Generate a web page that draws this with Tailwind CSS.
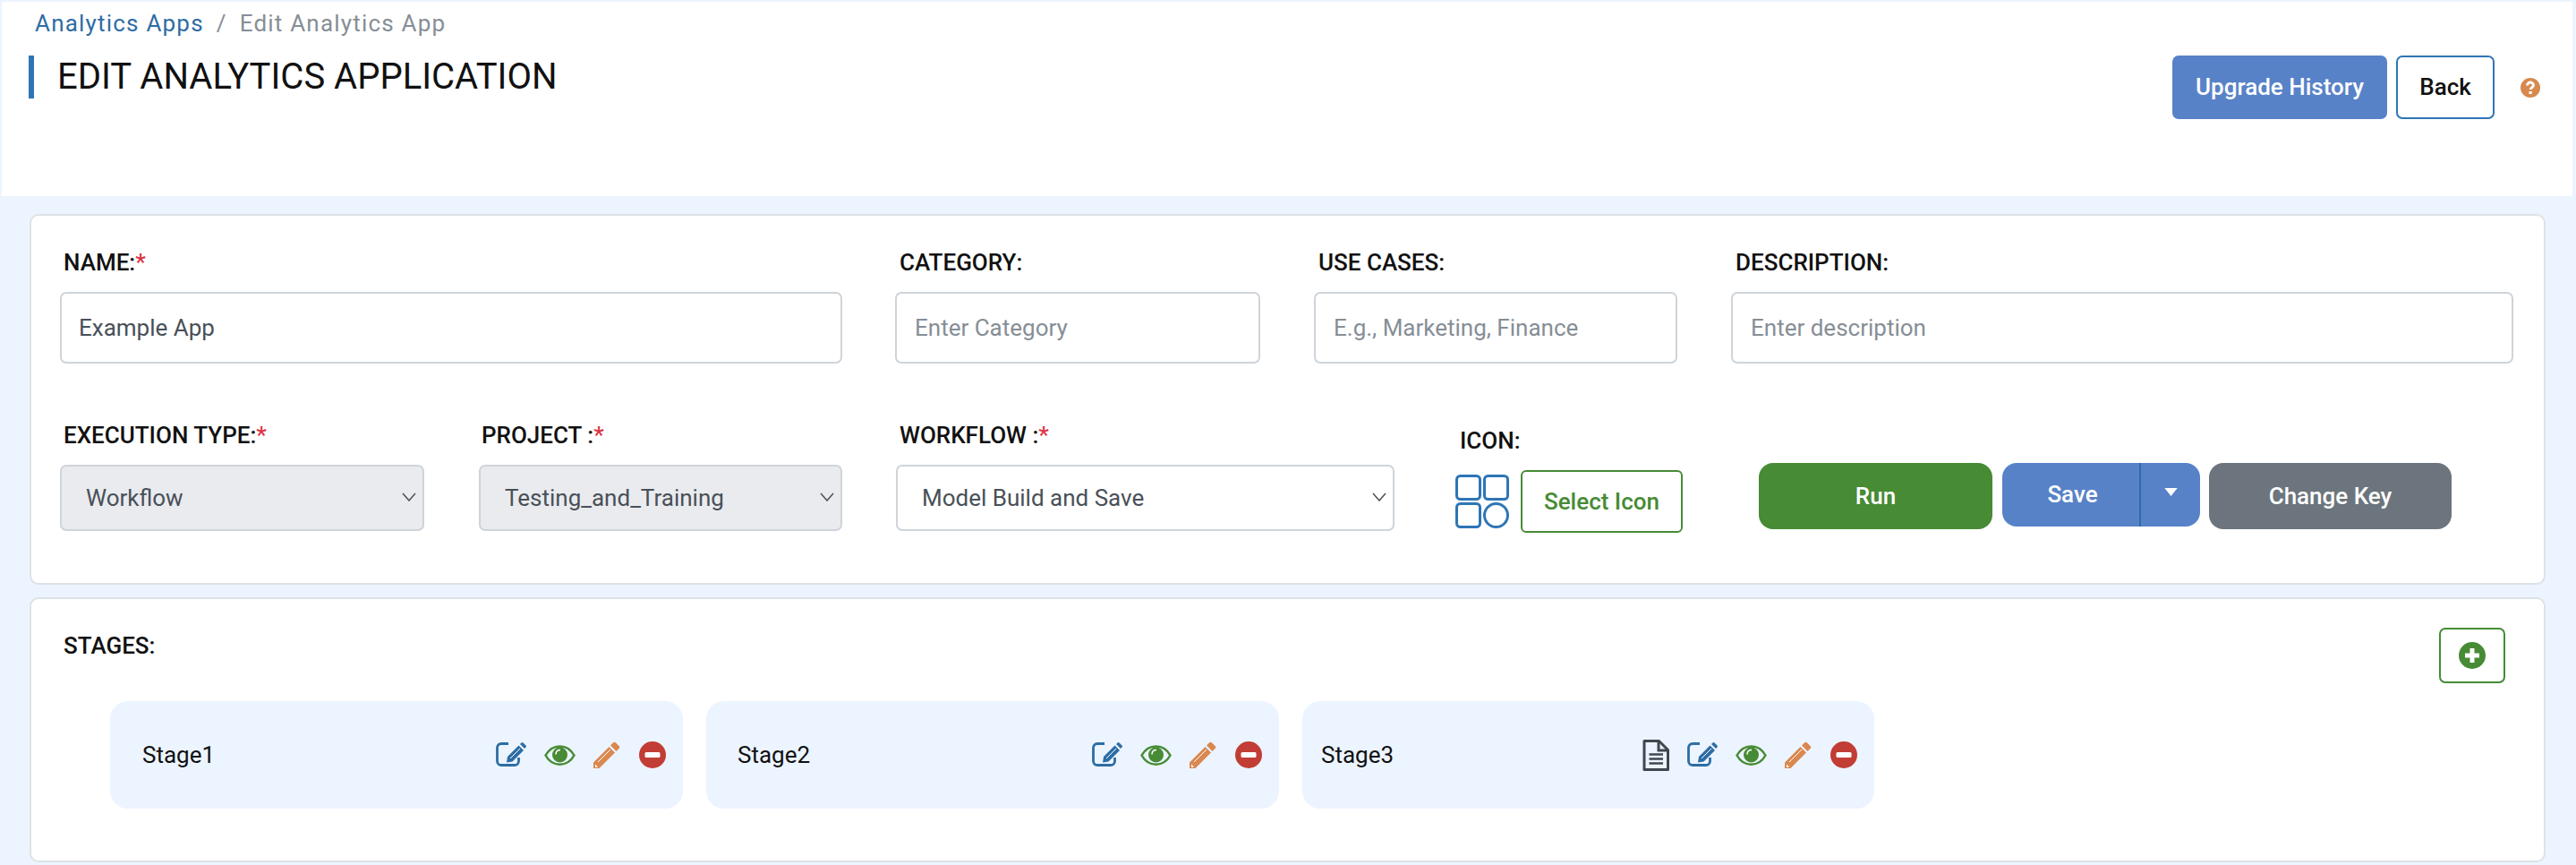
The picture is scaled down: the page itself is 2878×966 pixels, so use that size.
<!DOCTYPE html>
<html lang="en">
<head>
  <meta charset="UTF-8" />
  <title>Edit Analytics App</title>
  <script src="https://cdn.jsdelivr.net/npm/@tailwindcss/browser@4"></script>
</head>
<body class="bg-[#ecf4ff] font-['Roboto',sans-serif] text-[#111] text-[26px] h-[966px] overflow-hidden">

  <!-- shared icons -->
  <svg class="hidden">
    <symbol id="i-edit" viewBox="0 0 35 28">
      <path d="M14 1.500H6a4.500 4.500 0 0 0-4.500 4.500V21a4.500 4.500 0 0 0 4.500 4.500h15a4.500 4.500 0 0 0 4.500-4.500v-4" fill="none" stroke="#2e6da4" stroke-width="2.800"/>
      <path d="M12 22.500l1-6.500L25.500 3.500l5.500 5.500L18.500 21.500z" fill="#2e6da4"/>
      <path d="M27 2l1.500-1.500a1.500 1.500 0 0 1 2 0l3 3a1.500 1.500 0 0 1 0 2L32 7z" fill="#2e6da4"/>
      <path d="M16 18L27 7" stroke="#fff" stroke-width="1"/>
    </symbol>
    <symbol id="i-eye" viewBox="0 0 35 23">
      <path d="M1.500 11.500C9-2 26-2 33.500 11.500 26 25 9 25 1.500 11.500z" fill="none" stroke="#478b35" stroke-width="2.500"/>
      <circle cx="17.500" cy="11" r="8.500" fill="#478b35"/>
      <path d="M13 10.500c0-3 2-5 5-5" fill="none" stroke="#fff" stroke-width="1.500"/>
    </symbol>
    <symbol id="i-pencil" viewBox="0 0 30 30">
      <path d="M0 23.500L17.500 6l6.500 6.500L6.500 30H0z" fill="#d98850"/>
      <path d="M19 4.500l3-3a2 2 0 0 1 3 0l3.500 3.500a2 2 0 0 1 0 3l-3 3z" fill="#d98850"/>
      <path d="M5 23L19 9" stroke="#fff" stroke-width="1"/>
      <path d="M2 25.500l3 3-3 .5z" fill="#fff"/>
    </symbol>
    <symbol id="i-minus" viewBox="0 0 30 30">
      <circle cx="15" cy="15" r="15" fill="#c23d35"/>
      <rect x="6.500" y="12" width="17" height="6" rx="1.500" fill="#fff"/>
    </symbol>
    <symbol id="i-doc" viewBox="0 0 30 35">
      <path d="M2 1.500H18.500L28.500 11.500V33.500H2z" fill="none" stroke="#3f474f" stroke-width="3" stroke-linejoin="round"/>
      <path d="M18 2v10h10" fill="none" stroke="#3f474f" stroke-width="3"/>
      <path d="M7.500 16.500H23M7.500 21.500H23M7.500 26.500H23" stroke="#3f474f" stroke-width="2.500"/>
    </symbol>
  </svg>

  <!-- page header -->
  <header class="mx-[2px] mt-[2px] w-[2872px] h-[217px] bg-white flex justify-between items-start">
    <div>
      <nav class="pl-[37px] h-[26px] mt-[11px] flex items-center text-[26px] leading-[26px] tracking-[1.2px]">
        <a class="text-[#2e6da4]">Analytics Apps</a>
        <span class="text-[#868e96] mx-[14px]">/</span>
        <span class="text-[#868e96]">Edit Analytics App</span>
      </nav>
      <h1 class="ml-[30px] mt-[23px] h-[48px] border-l-[6px] border-[#2e75b6] pl-[26px] text-[40px] leading-[48px] font-normal text-[#111]">EDIT ANALYTICS APPLICATION</h1>
    </div>
    <div class="flex items-center mt-[60px] pr-[36px]">
      <button class="w-[240px] h-[71px] bg-[#5882c8] text-white font-medium rounded-[7px]">Upgrade History</button>
      <button class="ml-[10px] w-[110px] h-[71px] bg-white border-2 border-[#2e75b6] font-medium rounded-[7px]">Back</button>
      <svg class="ml-[29px]" width="22" height="22" viewBox="0 0 22 22">
        <circle cx="11" cy="11" r="11" fill="#d68a50"/>
        <path d="M7.500 8.500c0-2 1.500-3.500 3.500-3.500s3.500 1.400 3.500 3.200c0 2.300-3.300 2.500-3.300 4.800" fill="none" stroke="#fff" stroke-width="2.800"/>
        <rect x="9.500" y="15" width="3.200" height="3" fill="#fff"/>
      </svg>
    </div>
  </header>

  <main class="mt-[20px] ml-[33px] w-[2811px]">

    <!-- form card -->
    <section class="h-[414px] bg-white border-2 border-[#dee2e6] rounded-[10px] pl-[32px] pt-[36px]">
      <div class="flex">
        <div class="w-[874px]">
          <label class="block pl-[4px] h-[32px] leading-[32px] font-medium">NAME:<span class="text-[#dc3545]">*</span></label>
          <input class="mt-[17px] w-full h-[80px] border-2 border-[#ced4da] rounded-[7px] pl-[19px] pr-[20px] text-[26px] text-[#495057]" value="Example App" />
        </div>
        <div class="ml-[59px] w-[408px]">
          <label class="block pl-[5px] h-[32px] leading-[32px] font-medium">CATEGORY:</label>
          <input class="mt-[17px] w-full h-[80px] border-2 border-[#ced4da] rounded-[7px] px-[20px] text-[26px] placeholder:text-[#868e96]" placeholder="Enter Category" />
        </div>
        <div class="ml-[60px] w-[406px]">
          <label class="block pl-[5px] h-[32px] leading-[32px] font-medium">USE CASES:</label>
          <input class="mt-[17px] w-full h-[80px] border-2 border-[#ced4da] rounded-[7px] px-[20px] text-[26px] placeholder:text-[#868e96]" placeholder="E.g., Marketing, Finance" />
        </div>
        <div class="ml-[60px] w-[874px]">
          <label class="block pl-[5px] h-[32px] leading-[32px] font-medium">DESCRIPTION:</label>
          <input class="mt-[17px] w-full h-[80px] border-2 border-[#ced4da] rounded-[7px] px-[20px] text-[26px] placeholder:text-[#868e96]" placeholder="Enter description" />
        </div>
      </div>

      <div class="flex mt-[64px]">
        <div class="w-[407px]">
          <label class="block pl-[4px] h-[32px] leading-[32px] font-medium">EXECUTION TYPE:<span class="text-[#dc3545]">*</span></label>
          <div class="relative mt-[17px]">
            <select disabled class="appearance-none w-full h-[74px] bg-[#e9ebef] border-2 border-[#ced4da] rounded-[7px] pl-[27px] text-[26px] text-[#495057] opacity-100"><option>Workflow</option></select>
            <svg class="absolute right-[9px] top-[31px]" width="16" height="10" viewBox="0 0 16 10"><path d="M1 1l7 8 7-8" fill="none" stroke="#495057" stroke-width="1.500"/></svg>
          </div>
        </div>
        <div class="ml-[61px] w-[406px]">
          <label class="block pl-[3px] h-[32px] leading-[32px] font-medium">PROJECT :<span class="text-[#dc3545]">*</span></label>
          <div class="relative mt-[17px]">
            <select disabled class="appearance-none w-full h-[74px] bg-[#e9ebef] border-2 border-[#ced4da] rounded-[7px] pl-[27px] text-[26px] text-[#495057] opacity-100"><option>Testing_and_Training</option></select>
            <svg class="absolute right-[9px] top-[31px]" width="16" height="10" viewBox="0 0 16 10"><path d="M1 1l7 8 7-8" fill="none" stroke="#495057" stroke-width="1.500"/></svg>
          </div>
        </div>
        <div class="ml-[60px] w-[557px]">
          <label class="block pl-[4px] h-[32px] leading-[32px] font-medium">WORKFLOW :<span class="text-[#dc3545]">*</span></label>
          <div class="relative mt-[17px]">
            <select class="appearance-none w-full h-[74px] bg-white border-2 border-[#ced4da] rounded-[7px] pl-[27px] text-[26px] text-[#495057]"><option>Model Build and Save</option></select>
            <svg class="absolute right-[9px] top-[31px]" width="16" height="10" viewBox="0 0 16 10"><path d="M1 1l7 8 7-8" fill="none" stroke="#495057" stroke-width="1.500"/></svg>
          </div>
        </div>
        <div class="ml-[68px] w-[254px]">
          <label class="block pl-[5px] mt-[6px] h-[32px] leading-[32px] font-medium">ICON:</label>
          <div class="flex items-center mt-[17px]">
            <svg width="60" height="60" viewBox="0 0 60 60" fill="none" stroke="#2e75b6" stroke-width="3">
              <rect x="1.500" y="1.500" width="26" height="26" rx="4"/>
              <rect x="32.500" y="1.500" width="26" height="26" rx="4"/>
              <rect x="1.500" y="32.500" width="26" height="26" rx="4"/>
              <circle cx="45.500" cy="45.500" r="13"/>
            </svg>
            <button class="ml-[13px] w-[181px] h-[70px] bg-white border-2 border-[#478b35] text-[#478b35] font-medium rounded-[6px]">Select Icon</button>
          </div>
        </div>
        <div class="ml-[85px] flex items-start mt-[47px]">
          <button class="w-[261px] h-[74px] bg-[#478b35] text-white font-medium rounded-[16px]">Run</button>
          <div class="ml-[11px] w-[221px] h-[71px] flex bg-[#5882c8] text-white font-medium rounded-[16px]">
            <button class="w-[155px] pl-[4px] border-r-2 border-[#2e6da4]">Save</button>
            <button class="flex-1 flex items-center justify-center pb-[6px]"><svg width="15" height="9" viewBox="0 0 16 10"><path d="M0 0h16l-8 10z" fill="#fff"/></svg></button>
          </div>
          <button class="ml-[10px] w-[271px] h-[74px] bg-[#6c757d] text-white font-medium rounded-[16px]">Change Key</button>
        </div>
      </div>
    </section>

    <!-- stages card -->
    <section class="mt-[14px] h-[296px] bg-white border-2 border-[#dee2e6] rounded-[10px] pl-[36px] pr-[43px] pt-[32px]">
      <div class="flex justify-between items-start">
        <label class="block h-[40px] leading-[40px] font-medium">STAGES:</label>
        <button class="w-[74px] h-[62px] border-2 border-[#478b35] rounded-[7px] flex items-center justify-center">
          <svg width="30" height="30" viewBox="0 0 30 30"><circle cx="15" cy="15" r="15" fill="#478b35"/><path d="M15 7v16M7 15h16" stroke="#fff" stroke-width="5"/></svg>
        </button>
      </div>
      <div class="flex gap-[26px] ml-[52px] mt-[20px]">
        <div class="w-[640px] h-[120px] bg-[#ecf4ff] rounded-[20px] pl-[36px] pr-[19px] flex items-center">
          <span class="flex-1">Stage1</span>
          <svg class="w-[35px] h-[28px] mr-[19px]"><use href="#i-edit"/></svg>
          <svg class="w-[35px] h-[23px] mr-[20px]"><use href="#i-eye"/></svg>
          <svg class="w-[30px] h-[30px] mr-[21px]"><use href="#i-pencil"/></svg>
          <svg class="w-[30px] h-[30px]"><use href="#i-minus"/></svg>
        </div>
        <div class="w-[640px] h-[120px] bg-[#ecf4ff] rounded-[20px] pl-[35px] pr-[19px] flex items-center">
          <span class="flex-1">Stage2</span>
          <svg class="w-[35px] h-[28px] mr-[19px]"><use href="#i-edit"/></svg>
          <svg class="w-[35px] h-[23px] mr-[20px]"><use href="#i-eye"/></svg>
          <svg class="w-[30px] h-[30px] mr-[21px]"><use href="#i-pencil"/></svg>
          <svg class="w-[30px] h-[30px]"><use href="#i-minus"/></svg>
        </div>
        <div class="w-[639px] h-[120px] bg-[#ecf4ff] rounded-[20px] pl-[21px] pr-[19px] flex items-center">
          <span class="flex-1">Stage3</span>
          <svg class="w-[30px] h-[35px] mr-[20px]"><use href="#i-doc"/></svg>
          <svg class="w-[35px] h-[28px] mr-[19px]"><use href="#i-edit"/></svg>
          <svg class="w-[35px] h-[23px] mr-[20px]"><use href="#i-eye"/></svg>
          <svg class="w-[30px] h-[30px] mr-[21px]"><use href="#i-pencil"/></svg>
          <svg class="w-[30px] h-[30px]"><use href="#i-minus"/></svg>
        </div>
      </div>
    </section>
  </main>

</body>
</html>
